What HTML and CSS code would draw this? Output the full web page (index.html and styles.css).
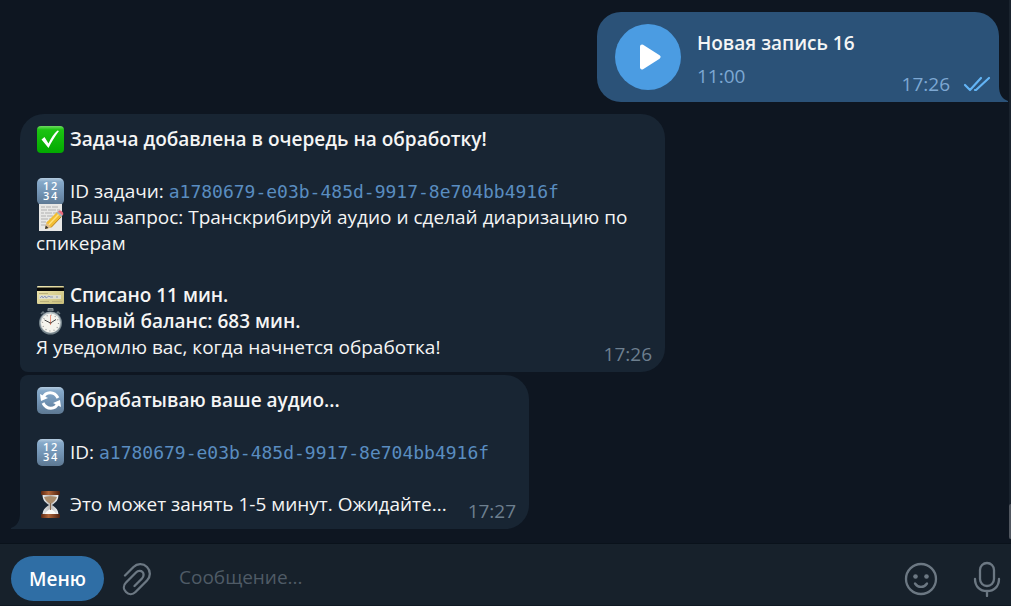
FILE: index.html
```html
<!DOCTYPE html>
<html lang="ru">
<head>
    <meta charset="UTF-8">
    <meta name="viewport" content="width=device-width, initial-scale=1.0">
    <title>Чат</title>
    <link rel="stylesheet" href="styles.css">
</head>
<body>
    <!-- Emoji gradients shared by the messages -->
    <svg class="sprite" aria-hidden="true">
        <defs>
            <linearGradient id="blueTile" x1="0" y1="0" x2="0" y2="1">
                <stop offset="0" stop-color="#b4cbdf"/>
                <stop offset="0.14" stop-color="#86a9c9"/>
                <stop offset="0.6" stop-color="#6f90b0"/>
                <stop offset="1" stop-color="#5d7892"/>
            </linearGradient>
            <linearGradient id="greenTile" x1="0" y1="0" x2="0" y2="1">
                <stop offset="0" stop-color="#6fdb62"/>
                <stop offset="0.14" stop-color="#1cc312"/>
                <stop offset="1" stop-color="#02a900"/>
            </linearGradient>
            <linearGradient id="gold" x1="0" y1="0" x2="1" y2="1">
                <stop offset="0" stop-color="#f0e9b4"/>
                <stop offset="1" stop-color="#c8bd79"/>
            </linearGradient>
            <linearGradient id="wood" x1="0" y1="0" x2="1" y2="0">
                <stop offset="0" stop-color="#5b2712"/>
                <stop offset="0.4" stop-color="#b0663a"/>
                <stop offset="1" stop-color="#4c1f0e"/>
            </linearGradient>
            <linearGradient id="glass" x1="0" y1="0" x2="1" y2="0">
                <stop offset="0" stop-color="#e9edf0"/>
                <stop offset="0.5" stop-color="#b9b6b4"/>
                <stop offset="1" stop-color="#f6f8fa"/>
            </linearGradient>
        </defs>
    </svg>

    <main class="chat">
        <!-- Outgoing audio -->
        <article class="message message-out">
            <button class="play" type="button" aria-label="Воспроизвести">
                <svg width="22" height="26" viewBox="0 0 22 26"><path d="M3 2.5 19.5 13 3 23.5Z" fill="#fff" stroke="#fff" stroke-width="4" stroke-linejoin="round"/></svg>
            </button>
            <div class="audio-info">
                <div class="audio-title">Новая запись 16</div>
                <div class="audio-length">11:00</div>
            </div>
            <div class="audio-meta">
                <time>17:26</time>
                <svg width="28" height="16" viewBox="0 0 28 16" fill="none" stroke="#63b4f5" stroke-width="2.200" stroke-linecap="round" stroke-linejoin="round"><path d="m2 9 5 5L18 2M12 14h1L26 2"/></svg>
            </div>
        </article>

        <!-- Incoming messages -->
        <article class="message message-in first">
            <p class="line strong"><svg class="emoji" viewBox="0 0 28 28"><rect x="1" y="1" width="27" height="27" rx="4" fill="url(#greenTile)"/><path d="M5.500 14.500 8.500 12l4 6.500C15 13 18 8.500 21.500 5.500l1.500.5C19 11 15.500 17 12.500 23Z" fill="#fff"/></svg> Задача добавлена в очередь на обработку!</p>
            <br>
            <p class="line"><svg class="emoji" viewBox="0 0 28 28"><rect x="1" y="1" width="27" height="27" rx="5" fill="url(#blueTile)"/><text class="tile-digits" x="7" y="13">1</text><text class="tile-digits" x="15" y="13">2</text><text class="tile-digits" x="7" y="23">3</text><text class="tile-digits" x="15" y="23">4</text></svg> ID задачи: <code>a1780679-e03b-485d-9917-8e704bb4916f</code></p>
            <p class="line"><svg class="emoji" viewBox="0 0 28 28"><path d="M3 1h23v27H3Z" fill="#e8e8e6"/><path d="M5 4h4m1 0h5m1 0h6M5 7h6m1 0h8m1 0h3M5 10h3m1 0h7m1 0h5M5 13h5m1 0h6M5 16h7m1 0h2M5 19h5m1 0h2M5 22h5" stroke="#b0b0b0" stroke-width="1"/><path d="m9 26 1.500-6.500L21 9l4.500 4.500L15 24.500Z" fill="#f2bd32"/><path d="m12.500 22 10.500-11" stroke="#ffe07a" stroke-width="1.500"/><path d="m15 24.500 10.500-11" stroke="#b97f1b"/><path d="m9 26 1.500-6.500 4.500 5Z" fill="#dfbd8b"/><path d="m9 26 .8-3.500 2.700 2.500Z" fill="#333"/><path d="m20.500 9.500 1.500-1.500 4.500 4.500-1.500 1.500Z" fill="#a9b3b9"/><path d="m22 8.500 1-.8c2-.6 4.700 1.500 4.200 3.700l-.7 1.100Z" fill="#e9697c"/></svg> Ваш запрос: Транскрибируй аудио и сделай диаризацию по спикерам</p>
            <br>
            <p class="line strong"><svg class="emoji" viewBox="0 0 28 28"><rect x="1" y="5" width="27" height="18" rx="1" fill="url(#gold)"/><path d="M1 6.500h27v3.500H1Z" fill="#090906"/><path d="M3 14h22v4H3Z" fill="#dedecb"/><path d="m4 17 2-2 1 2 2-2 1 2 3-2 1 1h3m4-1v2" stroke="#8b98ba" fill="none"/><path d="M3 12.500h9M4 20.500h9m3 0h10" stroke="#bbb17c"/></svg> Списано 11 мин.</p>
            <p class="line strong"><svg class="emoji" viewBox="0 0 28 28"><path d="M12 4V1.500h5V4" fill="#69747b" stroke="#8e999f"/><path d="m5 7 2-2 1.500 1.500m12 0L22 5l2 2" stroke="#68757d" stroke-width="1.500" fill="none"/><circle cx="14.500" cy="16" r="11.500" fill="#75838a"/><circle cx="14.500" cy="15.500" r="10.500" fill="#b8c1c5"/><circle cx="14.500" cy="16" r="9.500" fill="#f5f4ee"/><circle cx="14.500" cy="16" r="8" fill="none" stroke="#999" stroke-width="1.200" stroke-dasharray="1 3.190"/><path d="m14.500 16 5.500-3.500M14.500 16l-6-3" stroke="#444"/><path d="M14.500 18V8" stroke="#ef9b84"/><circle cx="14.500" cy="16" r="1" fill="#8a5a4f"/></svg> Новый баланс: 683 мин.</p>
            <div class="last-line">
                <p class="line">Я уведомлю вас, когда начнется обработка!</p>
                <time>17:26</time>
            </div>
        </article>

        <article class="message message-in last">
            <p class="line strong"><svg class="emoji" viewBox="0 0 28 28"><rect x="1" y="1" width="27" height="27" rx="5" fill="url(#blueTile)"/><path d="M7 12c2.500-7 11.500-7 15 0M22 17c-2.500 7-11.500 7-15 0" fill="none" stroke="#fff" stroke-width="3"/><path d="m4 8 1 7 7-3ZM25 21l-1-7-7 3Z" fill="#fff"/></svg> Обрабатываю ваше аудио...</p>
            <br>
            <p class="line"><svg class="emoji" viewBox="0 0 28 28"><rect x="1" y="1" width="27" height="27" rx="5" fill="url(#blueTile)"/><text class="tile-digits" x="7" y="13">1</text><text class="tile-digits" x="15" y="13">2</text><text class="tile-digits" x="7" y="23">3</text><text class="tile-digits" x="15" y="23">4</text></svg> ID: <code>a1780679-e03b-485d-9917-8e704bb4916f</code></p>
            <br>
            <div class="last-line">
                <p class="line"><svg class="emoji" viewBox="0 0 28 28"><path d="M6.500 4h16c0 6-2 8-6.500 11 4.500 3 6.500 5 6.500 11h-16c0-6 2-8 6.500-11-4.500-3-6.500-5-6.500-11Z" fill="url(#glass)"/><path d="M8 7c4-1 9-1 13 0-1 3-3 5-6.500 7C11 12 9 10 8 7Z" fill="#a98b6b"/><path d="M14.500 14v5c3 1 5 3 6 6h-12c1-3 3-5 6-6" fill="#faf9f6"/><path d="M14.500 13v7" stroke="#8b6b50"/><rect x="5" y="1" width="19" height="4" rx="1" fill="url(#wood)"/><rect x="5" y="24" width="19" height="4" rx="1" fill="url(#wood)"/></svg> Это может занять 1-5 минут. Ожидайте...</p>
                <time>17:27</time>
            </div>
        </article>

        <div class="scroll-track"><div class="scroll-thumb"></div></div>
    </main>

    <form class="composer" action="#" method="post">
        <button class="menu" type="button">Меню</button>
        <button class="icon attach" type="button" aria-label="Прикрепить файл">
            <svg width="34" height="34" viewBox="0 0 34 34"><path d="M5 13.500 13.500 5C17 1.500 23 1 27 5s3.500 10 0 13.500L15.500 30C12.500 33 8.500 32.500 6 30s-3-6.500 0-9.500L16 10.500c2-2 5-2 6.500-.5s1.500 4.500-.5 6.500l-7.500 7.500"/></svg>
        </button>
        <input class="text" type="text" name="message" placeholder="Сообщение..." aria-label="Сообщение">
        <button class="icon" type="button" aria-label="Эмодзи">
            <svg width="34" height="34" viewBox="0 0 34 34"><circle cx="17" cy="17" r="15"/><path d="M11 21.500c3 4.500 9 4.500 12 0"/><circle class="dot" cx="11.500" cy="14.500" r="2.300"/><circle class="dot" cx="22.500" cy="14.500" r="2.300"/></svg>
        </button>
        <button class="icon mic" type="button" aria-label="Голосовое сообщение">
            <svg width="34" height="36" viewBox="0 0 34 36"><rect x="10" y="2" width="14" height="23" rx="7"/><path d="M5 18c0 7.500 5 12 12 12s12-4.500 12-12M17 30v5"/></svg>
        </button>
    </form>
</body>
</html>
```
FILE: styles.css
```css
body {
    margin: 0;
    height: 100vh;
    display: flex;
    flex-direction: column;
    font-family: "Open Sans", "Noto Sans", sans-serif;
    font-size: 19px;
    line-height: 26px;
    color: #f5f5f5;
    background: #0e1621;
}

button,
input {
    font: inherit;
    border: none;
    padding: 0;
}

button {
    cursor: pointer;
}

.sprite {
    position: absolute;
    width: 0;
    height: 0;
}

/* Messages */
.chat {
    position: relative;
    flex: 1;
    min-height: 0;
    overflow: hidden;
    display: flex;
    flex-direction: column;
    align-items: flex-start;
    padding: 12px 12px 0 20px;
}

.message {
    position: relative;
    box-sizing: border-box;
    max-width: 645px;
    border-radius: 24px;
}

.message-out {
    align-self: flex-end;
    display: flex;
    min-width: 402px;
    min-height: 90px;
    margin-bottom: 12px;
    padding: 12px 8px 5px 18px;
    border-bottom-right-radius: 0;
    background: #2b5278;
}

.message-in {
    padding: 12px 13px 5px 16px;
    background: #182533;
}

.first {
    margin-bottom: 3px;
    border-bottom-left-radius: 8px;
}

.last {
    border-top-left-radius: 8px;
    border-bottom-left-radius: 0;
}

/* Bubble tails */
.message-out::after,
.last::after {
    content: "";
    position: absolute;
    bottom: 0;
    width: 9px;
    height: 16px;
    background: inherit;
}

.message-out::after {
    left: 100%;
    clip-path: path("M0 0C0 8 3 13 9 15V16H0Z");
}

.last::after {
    right: 100%;
    clip-path: path("M9 0C9 8 6 13 0 15V16H9Z");
}

.line {
    margin: 0;
}

.strong,
.audio-title,
.menu {
    font-weight: 600;
}

.emoji {
    width: 28px;
    height: 28px;
    margin: -1px 1px -1px 0;
    vertical-align: top;
}

.tile-digits {
    font: 600 11px "Open Sans", sans-serif;
    fill: #fff;
}

code {
    font-family: "DejaVu Sans Mono", monospace;
    font-size: 18px;
    line-height: 1;
    color: #5a8dc0;
}

.last-line {
    display: flex;
    justify-content: space-between;
    gap: 21px;
}

time {
    color: #6d7f8f;
}

.last-line time {
    padding-top: 7px;
}

/* Audio */
.play {
    display: flex;
    align-items: center;
    justify-content: center;
    width: 66px;
    height: 66px;
    padding-left: 4px;
    border-radius: 50%;
    background: #4b9ce2;
}

.audio-info {
    padding: 6px 0 0 16px;
}

.audio-length {
    margin-top: 7px;
}

.audio-length,
.audio-meta time {
    color: #7da8d3;
}

.audio-meta {
    display: flex;
    align-items: center;
    align-self: flex-end;
    gap: 13px;
    margin-left: auto;
}

/* Scrollbar */
.scroll-track {
    position: absolute;
    top: 0;
    right: 0;
    bottom: 4px;
    width: 2px;
    background: #1a232e;
}

.scroll-thumb {
    position: absolute;
    bottom: 0;
    width: 100%;
    height: 35px;
    border-radius: 2px 0 0 2px;
    background: #50565f;
}

/* Message input */
.composer {
    display: flex;
    align-items: center;
    padding: 12px 7px 4px 11px;
    border-top: 1px solid #0a121b;
    border-bottom: 1px solid #101923;
    background: #17212b;
}

.menu {
    width: 93px;
    height: 45px;
    border-radius: 23px;
    color: #fff;
    background: #2f6ea5;
}

.icon {
    display: flex;
    background: none;
}

.icon svg {
    fill: none;
    stroke: #6c7883;
    stroke-width: 2.3;
    stroke-linecap: round;
    stroke-linejoin: round;
}

.icon .dot {
    fill: #6c7883;
    stroke: none;
}

.attach {
    margin: 0 25px 0 16px;
}

.text {
    flex: 1;
    min-width: 0;
    padding-bottom: 4px;
    color: #f5f5f5;
    background: none;
    outline: none;
}

.text::placeholder {
    color: #4f5b66;
    opacity: 1;
}

.mic {
    margin-left: 32px;
}
```
